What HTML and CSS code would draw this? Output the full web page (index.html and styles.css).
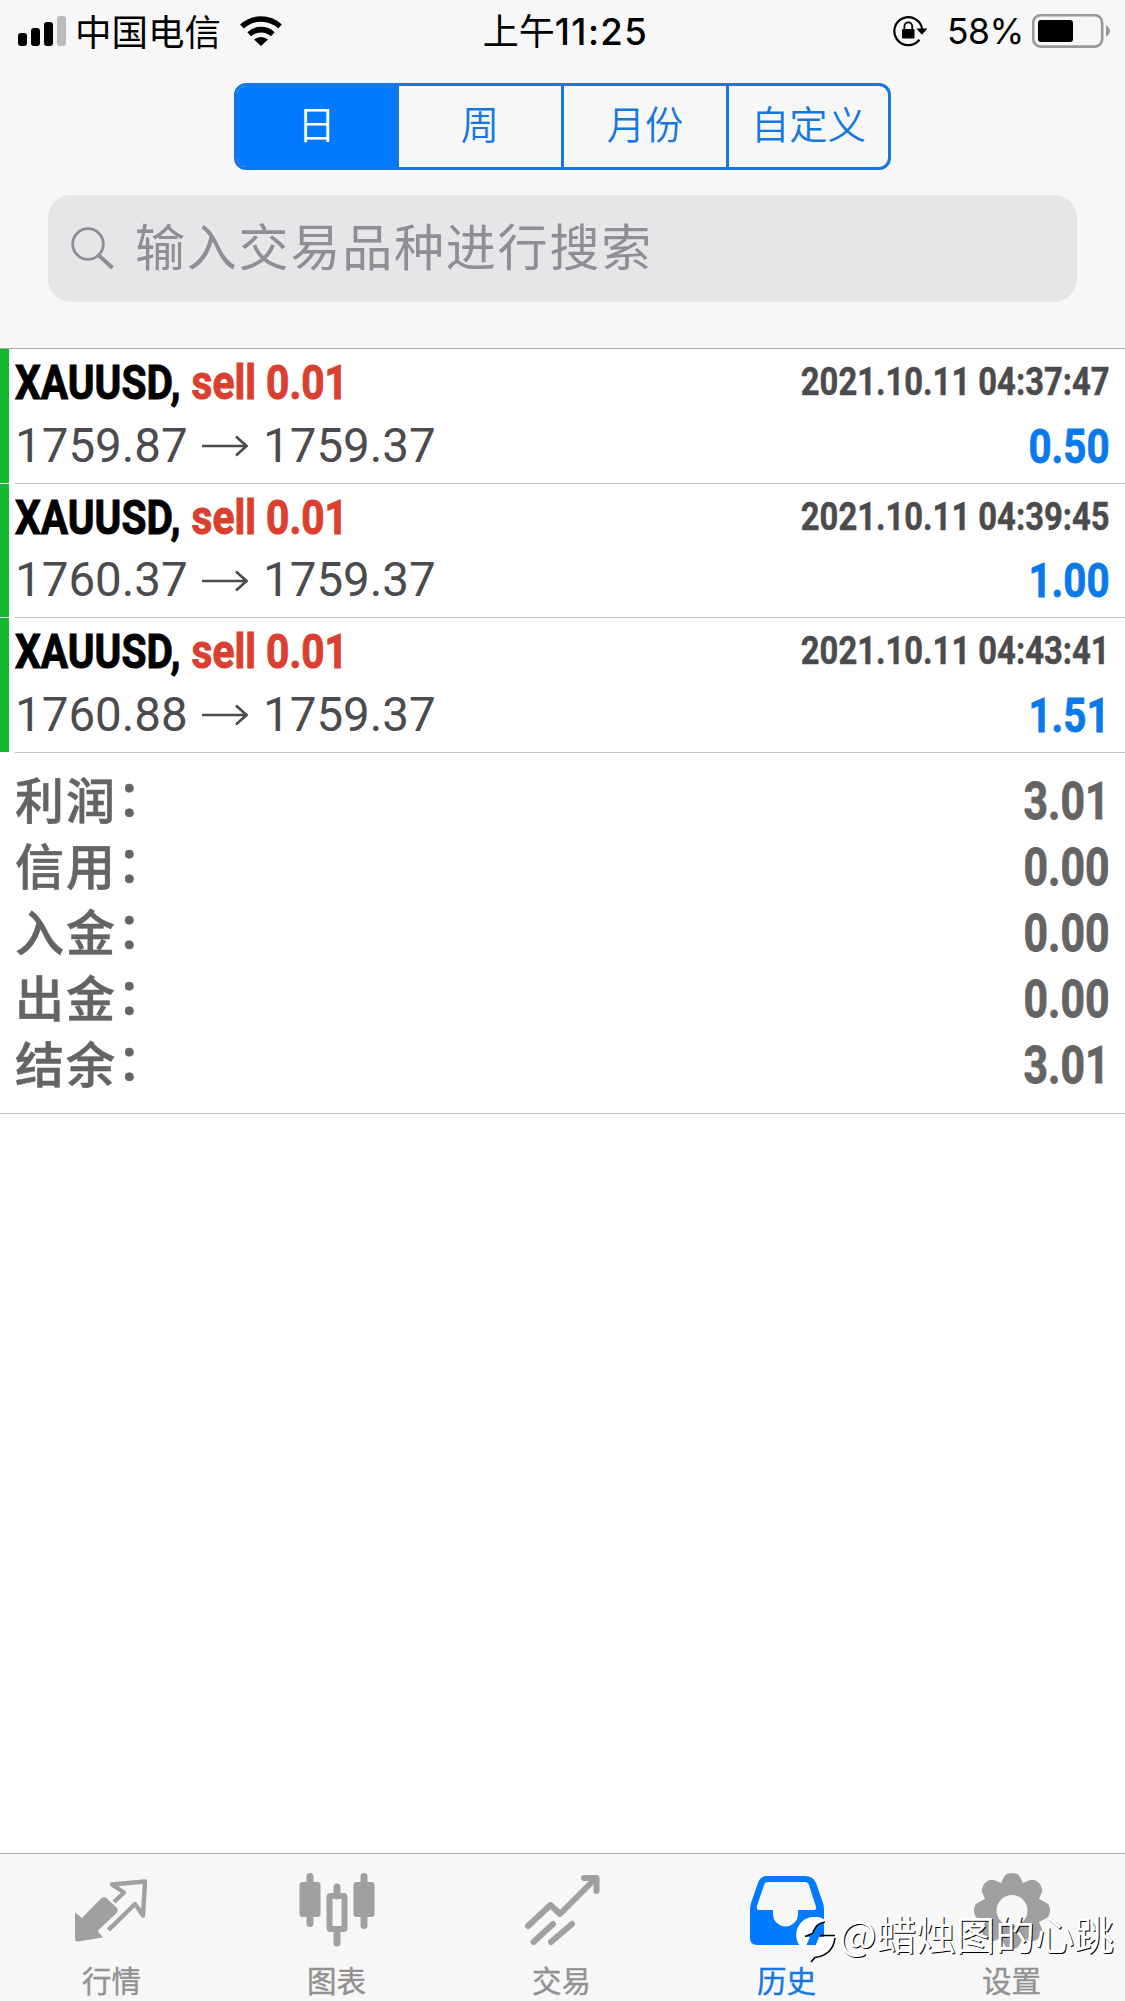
FILE: index.html
```html
<!DOCTYPE html>
<html lang="zh-CN">
<head>
<meta charset="utf-8">
<title>历史</title>
<link rel="stylesheet" href="styles.css">
</head>
<body>
<div class="app">
  <header class="header">
    <div class="status">
      <div class="status-left">
        <svg class="signal" width="48" height="31" viewBox="0 0 48 31"><rect x="0" y="17" width="9" height="13" rx="3"/><rect x="13" y="12" width="9" height="18" rx="3"/><rect x="26" y="6" width="9" height="24" rx="3"/><rect x="39" y="0" width="9" height="30" rx="3" fill="#bbb"/></svg>
        <span class="carrier">中国电信</span>
        <svg class="wifi" width="42" height="31" viewBox="0 0 42 31"><g fill="none" stroke="#000" stroke-width="5.6"><path d="M2 10.5a28 28 0 0 1 38 0"/><path d="M9.2 18.2a17.5 17.5 0 0 1 23.6 0"/></g><path d="M21 30l-7-6.4a10.5 10.5 0 0 1 14 0z"/></svg>
      </div>
      <div class="clock"><span>上午</span><span class="digits">11:25</span></div>
      <div class="status-right">
        <svg class="lock" width="35" height="32" viewBox="0 0 35 32"><path d="M26.4 24.8a14 14 0 1 1 2.9-9.8" fill="none" stroke="#000" stroke-width="2.2"/><path d="M23.3 13.5h11.2l-5.6 6.2z"/><rect x="9" y="14" width="12.5" height="9.6" rx="1.2"/><path d="M11.4 15v-3.7a3.9 3.9 0 0 1 7.8 0V15" fill="none" stroke="#000" stroke-width="1.8"/></svg>
        <span class="percent">58%</span>
        <svg class="battery" width="79" height="34" viewBox="0 0 79 34"><rect x="1.2" y="1.2" width="69" height="31.4" rx="7.5" fill="none" stroke="#999" stroke-width="2.6"/><rect x="6" y="6" width="35" height="22" rx="3"/><path d="M74 11q8 6 0 12z" fill="#999"/></svg>
      </div>
    </div>
    <nav class="segments">
      <span class="segment selected">日</span><span class="segment">周</span><span class="segment">月份</span><span class="segment">自定义</span>
    </nav>
    <div class="search">
      <svg width="44" height="44" viewBox="0 0 44 44"><circle cx="17" cy="17" r="15.3"/><path d="M28 28.5L41.5 41" stroke-width="4"/></svg>
      <span>输入交易品种进行搜索</span>
    </div>
  </header>
  <main class="main">
    <section class="deals">
      <article class="deal">
        <div class="line"><div class="title"><span class="symbol">XAUUSD,</span> <span class="side">sell 0.01</span></div><time class="date">2021.10.11 04:37:47</time></div>
        <div class="line second"><div class="prices"><span>1759.87</span><svg class="arrow" width="46" height="22" viewBox="0 0 46 22"><path d="M0 11H44M34 1.5L44.5 11L34 20.5"/></svg><span>1759.37</span></div><span class="profit">0.50</span></div>
      </article>
      <article class="deal">
        <div class="line"><div class="title"><span class="symbol">XAUUSD,</span> <span class="side">sell 0.01</span></div><time class="date">2021.10.11 04:39:45</time></div>
        <div class="line second"><div class="prices"><span>1760.37</span><svg class="arrow" width="46" height="22" viewBox="0 0 46 22"><path d="M0 11H44M34 1.5L44.5 11L34 20.5"/></svg><span>1759.37</span></div><span class="profit">1.00</span></div>
      </article>
      <article class="deal">
        <div class="line"><div class="title"><span class="symbol">XAUUSD,</span> <span class="side">sell 0.01</span></div><time class="date">2021.10.11 04:43:41</time></div>
        <div class="line second"><div class="prices"><span>1760.88</span><svg class="arrow" width="46" height="22" viewBox="0 0 46 22"><path d="M0 11H44M34 1.5L44.5 11L34 20.5"/></svg><span>1759.37</span></div><span class="profit">1.51</span></div>
      </article>
    </section>
    <dl class="summary">
      <div class="total"><dt>利润<span class="colon">：</span></dt><dd>3.01</dd></div>
      <div class="total"><dt>信用<span class="colon">：</span></dt><dd>0.00</dd></div>
      <div class="total"><dt>入金<span class="colon">：</span></dt><dd>0.00</dd></div>
      <div class="total"><dt>出金<span class="colon">：</span></dt><dd>0.00</dd></div>
      <div class="total"><dt>结余<span class="colon">：</span></dt><dd>3.01</dd></div>
    </dl>
  </main>
  <footer class="tabs">
    <div class="tab"><svg width="76" height="76" viewBox="0 0 76 76"><path d="M1 44.500L8 50L27 30.500Q30 28 33 30.500L42.500 39.500Q45 42.500 42.500 45L23.500 63L29 69.500L4 73.500Q1 74 1 71z"/><path d="M40 34L50 24.500L38 16.500L71 13.500L69 47.500L61 36L34.500 62" fill="none" stroke="#a0a0a0" stroke-width="4.400" stroke-linejoin="round"/></svg><span>行情</span></div>
    <div class="tab"><svg width="76" height="76" viewBox="0 0 76 76"><path d="M11 8.500v47M65 8.500v49M38 19v9M38 66v9" stroke="#a0a0a0" stroke-width="7" stroke-linecap="round"/><rect x=".5" y="14" width="21" height="35" rx="3"/><rect x="54.500" y="14" width="21" height="35" rx="3"/><rect x="30.500" y="28" width="15" height="33" rx="1" fill="none" stroke="#a0a0a0" stroke-width="6"/></svg><span>图表</span></div>
    <div class="tab"><svg width="76" height="76" viewBox="0 0 76 76"><path d="M4 58L26.500 37L36 46L70 12M60 10H72.500V23M9.500 74L29 56M27 74L48 56" fill="none" stroke="#a0a0a0" stroke-width="6" stroke-linecap="round" stroke-linejoin="round"/></svg><span>交易</span></div>
    <div class="tab active"><svg width="76" height="76" viewBox="0 0 76 76"><path fill-rule="evenodd" d="M18 8H56Q64 8 67 15L74 35Q75 38 75 42V70Q75 77 68 77H8Q1 77 1 70V42Q1 38 2 35L9 15Q11 8 18 8zM19 14Q16 14 15 17L8 38Q7 42 10 42H24V46A12.500 12.500 0 0 0 49 46V42H65Q68 42 67 39L60 17Q59 14 56 14z"/></svg><span>历史</span></div>
    <div class="tab"><svg width="76" height="76" viewBox="0 0 76 76"><path fill-rule="evenodd" d="M30 9Q32 5 38 5Q44 5 46 9L49 15L56 12Q61 11 65 15Q69 19 68 24L65 31L71 34Q76 36 76 42.500Q76 49 71 51L65 54L68 61Q69 66 65 70Q61 74 56 73L49 70L46 76Q44 81 38 81Q32 81 30 76L27 70L20 73Q15 74 11 70Q7 66 8 61L11 54L5 51Q0 49 0 42.500Q0 36 5 34L11 31L8 24Q7 19 11 15Q15 11 20 12L27 15zM38 27A15.500 15.500 0 1 0 38.010 27z"/></svg><span>设置</span></div>
  </footer>
  <div class="watermark">
    <svg width="43" height="46" viewBox="0 0 43 46"><path d="M29 3A17 17 0 0 0 8 33Q11 27 14 20L9 19.500L16 17Q20 6 30 5zM19 30L23 20H39Q38 38 18 40L15 44Q16 38 19 36Q29 35 33 26Q27 32 19 30z" fill="#fff"/><path d="M29 5Q20 6 16.500 16.500L9 19.500M24 18.500H39M39 21Q37 38 19 40.500L15 45" fill="none" stroke="#000" stroke-width="1.600"/></svg>
    <span>@蜡烛图的心跳</span>
  </div>
</div>
</body>
</html>
```
FILE: styles.css
```css
* { box-sizing: border-box; }
body { margin: 0; background: #fff; font-family: Roboto, "Noto Sans CJK SC", sans-serif; }
.app { position: relative; height: 2001px; display: flex; flex-direction: column; overflow: hidden; }
svg { display: block; flex: none; }

.header { height: 349px; background: #f7f7f7; border-bottom: 1px solid #aaa; flex: none; }
.status { display: grid; grid-template-columns: 1fr auto 1fr; height: 60px; padding: 0 14px 0 18px; align-items: center; font: 36px/60px Inter, "Noto Sans CJK SC", sans-serif; }
.status-left, .status-right, .clock { display: flex; align-items: center; }
.status-right { justify-content: flex-end; }
.carrier { margin-left: 9px; width: 148px; font-size: 36.5px; white-space: nowrap; font-family: "Noto Sans CJK SC", sans-serif; }
.wifi { margin-left: 17px; }
.clock { padding: 2px 0 0 2px; }
.clock .digits { font-weight: 500; font-size: 36.5px; letter-spacing: 1.4px; }
.percent { margin: 0 11px 0 19px; padding-top: 2px; font-size: 35.5px; width: 74px; letter-spacing: -.5px; white-space: nowrap; }

.segments { display: grid; grid-template-columns: 159px 165px 165px 1fr; width: 657px; height: 87px; margin: 23px auto 0 234px; border: 3px solid #1478df; border-radius: 12px; overflow: hidden; }
.segment { display: flex; align-items: center; justify-content: center; padding-bottom: 6px; font: 350 38.3px/1 "Noto Sans CJK SC", sans-serif; color: #1478df; border-left: 3px solid #1478df; }
.segment.selected { background: #007aff; color: #fff; border: 0; }
.search { display: flex; align-items: center; gap: 20px; width: 1029px; height: 107px; margin: 25px 48px 0; padding-left: 23px; border-radius: 23px; background: #e6e6e8; color: #8e8e93; font: 400 50px/1 "Noto Sans CJK SC", sans-serif; letter-spacing: 1.8px; }
.search span { padding-bottom: 9px; }
.search svg { fill: none; stroke: #8e8e93; stroke-width: 2.8; }

.main { flex: 1; }
.deal { height: 134.67px; padding: 2px 15px 0 15px; background: linear-gradient(#c4c4c4, #c4c4c4) 15px 100% / 100% 1px no-repeat, linear-gradient(#16b830, #16b830) 0 0 / 9px calc(100% - 1px) no-repeat; }
.line { display: flex; justify-content: space-between; height: 63px; line-height: 63px; align-items: center; white-space: nowrap; }
.second { padding-top: 1px; }
.title { font-weight: 700; font-size: 49px; transform: scaleX(.83); transform-origin: left; -webkit-text-stroke: 1px; }
.symbol { color: #000; }
.side { margin-left: 1px; color: #d9402f; }
.date { font-weight: 700; font-size: 39px; color: #4b4b4d; transform: scaleX(.84); transform-origin: right; -webkit-text-stroke: .5px; }
.prices { display: flex; align-items: center; font-size: 47.5px; color: #4b4b4d; }
.prices span { width: 170px; }
.arrow { margin: 0 15px 0 17px; fill: none; stroke: #4b4b4d; stroke-width: 2.6; }
.profit { font-weight: 700; font-size: 48px; color: #0a7aeb; transform: scaleX(.84); transform-origin: right; -webkit-text-stroke: .8px; }

.summary { margin: 0; padding: 16px 15px 0; height: 361px; border-bottom: 1px solid #c4c4c4; color: #646464; }
.total { display: flex; justify-content: space-between; align-items: center; height: 66px; line-height: 66px; }
.total dt { padding-bottom: 8px; font: 500 49px/58px "Noto Sans CJK SC", sans-serif; letter-spacing: 2px; -webkit-text-stroke: .6px; }
.colon { position: relative; top: -3px; }
.total dd { margin: 0; font-weight: 700; font-size: 51px; transform: scaleX(.84); transform-origin: right; -webkit-text-stroke: .8px; }

.tabs { display: grid; grid-template-columns: repeat(5, 1fr); height: 148px; border-top: 1px solid #aaa; background: #f7f7f7; flex: none; }
.tab { display: flex; flex-direction: column; align-items: center; padding: 14px 2px 0 0; color: #929292; fill: #a0a0a0; font: 29.5px/34px "Noto Sans CJK SC", sans-serif; -webkit-text-stroke: .4px; }
.tab svg { overflow: visible; }
.tab span { margin-top: 18px; }
.tab.active { color: #1478df; fill: #007aff; }

.watermark { position: absolute; left: 796px; top: 1917px; display: flex; color: #fff; font: 400 39.6px/32px "Noto Sans CJK SC", sans-serif; text-shadow: 1px 1px 0 #000; white-space: nowrap; }
```
